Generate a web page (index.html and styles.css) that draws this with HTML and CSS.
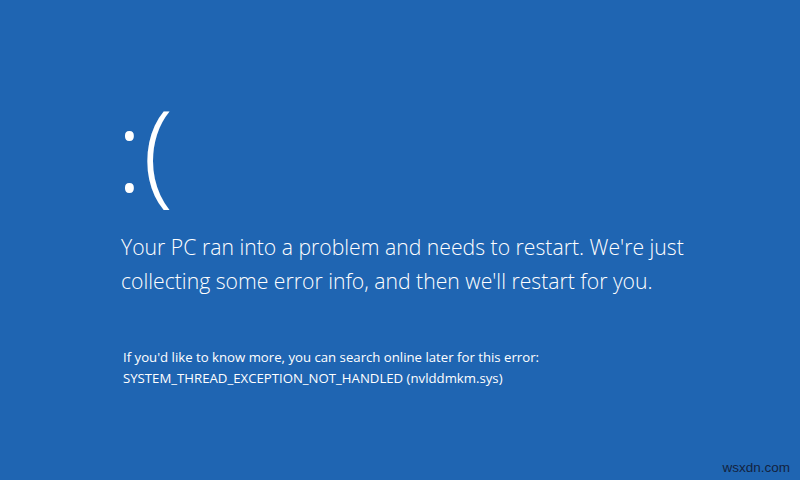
FILE: index.html
```html
<!DOCTYPE html>
<html>
<head>
<meta charset="utf-8">
<link rel="stylesheet" href="styles.css">
</head>
<body>
<main class="screen">
  <div class="face">:(</div>
  <p class="message">Your PC ran into a problem and needs to restart. We're just<br>collecting some error info, and then we'll restart for you.</p>
  <p class="details">If you'd like to know more, you can search online later for this error:<br>SYSTEM_THREAD_EXCEPTION_NOT_HANDLED (nvlddmkm.sys)</p>
  <div class="watermark">wsxdn.com</div>
</main>
</body>
</html>
```
FILE: styles.css
```css
html, body {
  margin: 0;
  padding: 0;
  width: 800px;
  height: 480px;
  overflow: hidden;
  background: #1f65b2;
}
.screen {
  position: relative;
  box-sizing: border-box;
  width: 800px;
  height: 480px;
  padding: 84px 0 0 116px;
  color: #ffffff;
  font-family: "Open Sans", "Noto Sans", sans-serif;
}
.face {
  font-weight: 300;
  font-size: 112px;
  line-height: 130px;
  margin: 0;
}
.message {
  margin: 16px 0 0 0;
  padding-left: 5px;
  font-weight: 300;
  font-size: 21.2px;
  line-height: 34px;
}
.details {
  margin: 49px 0 0 0;
  padding-left: 7px;
  font-weight: 400;
  font-size: 13.2px;
  line-height: 21px;
}
.watermark {
  position: absolute;
  right: 10px;
  bottom: 5px;
  font-family: "Liberation Sans", Arial, sans-serif;
  font-size: 13.5px;
  color: #13233f;
}
```
